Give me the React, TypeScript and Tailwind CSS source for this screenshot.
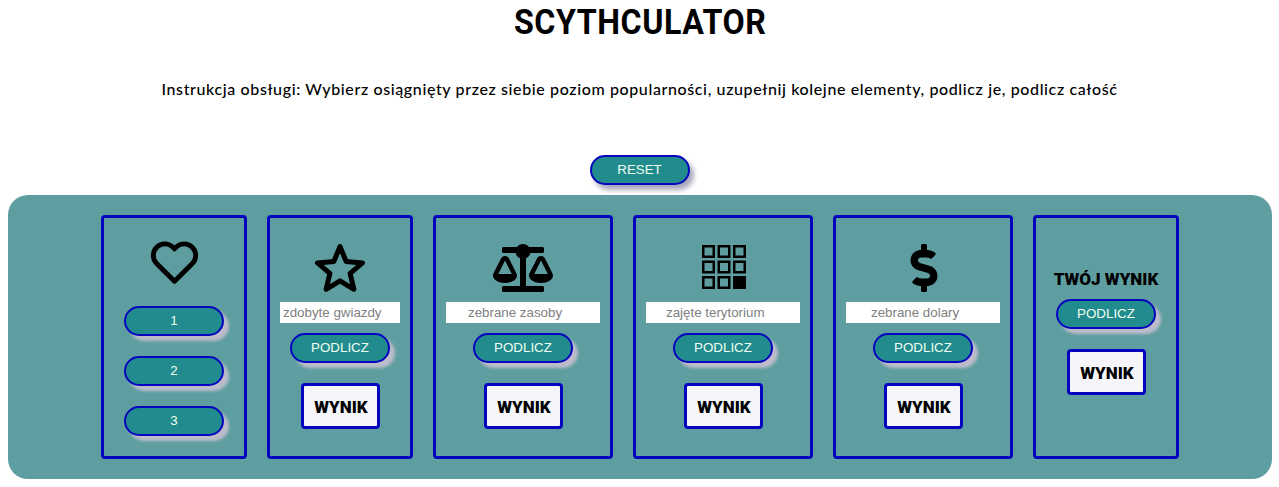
import { FaBalanceScale, FaDollarSign } from 'react-icons/fa';

function PillButton({ label, className = 'shadow-[5px_5px_3px_#bcbccb]' }: { label: string; className?: string }) {
    return (
        <button className={`h-[30px] w-[100px] rounded-[15px] border-2 border-[#0505c0] bg-[#228b8d] text-[13.33px] text-[#f0fff0] font-['Liberation_Sans',sans-serif] ${className}`}>
            {label}
        </button>
    );
}

function ResultBox({ className = '' }: { className?: string }) {
    return (
        <div className={`ml-[1px] flex h-[46px] w-[79px] items-center justify-center rounded-[4px] border-[3px] border-[#0505c0] bg-[#f5f5fa] pl-[1px] pt-[3px] text-[17px] font-black text-black font-['Roboto',sans-serif] ${className}`}>
            WYNIK
        </div>
    );
}

function HeartIcon() {
    return (
        <svg width="53" height="53" viewBox="0 0 24 24" fill="none" stroke="black" strokeWidth="2.2" strokeLinejoin="round">
            <path d="M12 20.5 L3.8 12.3 A5.2 5.2 0 0 1 11.2 5 L12 5.8 L12.8 5 A5.2 5.2 0 0 1 20.2 12.3 Z" />
        </svg>
    );
}

function StarIcon() {
    return (
        <svg width="50" height="48" viewBox="0 0 50 48" fill="none" stroke="black" strokeWidth="5" strokeLinejoin="round">
            <path d="M25 2.5 L31.2 17.6 L47.5 18.9 L35.1 29.4 L38.9 45.3 L25 36.8 L11.1 45.3 L14.9 29.4 L2.5 18.9 L18.8 17.6 Z" />
        </svg>
    );
}

function GridIcon() {
    const cells = [0, 1, 2, 3, 4, 5, 6, 7, 8];
    return (
        <svg width="44" height="44" viewBox="0 0 44 44" fill="none" className="ml-[2px] mt-[1px]">
            {cells.map((i) => (
                <rect
                    key={i}
                    x={1.25 + (i % 3) * 15.5}
                    y={1.25 + Math.floor(i / 3) * 15.5}
                    width="10.5"
                    height="10.5"
                    stroke="black"
                    strokeWidth="2.5"
                    fill={i === 8 ? 'black' : 'none'}
                />
            ))}
        </svg>
    );
}

function InputCard({
    icon,
    placeholder,
    width,
    inputWidth,
    pad,
}: {
    icon: React.ReactNode;
    placeholder: string;
    width: string;
    inputWidth: string;
    pad: string;
}) {
    return (
        <div className={`flex h-[244px] flex-col items-center rounded-[4px] border-[3px] border-[#0505c0] ${width}`}>
            <div className="flex h-[84px] w-full items-start justify-center pt-[26px]">{icon}</div>
            <input
                readOnly
                placeholder={placeholder}
                className={`h-[21px] bg-white text-[13.33px] text-black placeholder:text-[#808080] outline-none font-['Liberation_Sans',sans-serif] ${inputWidth} ${pad}`}
            />
            <PillButton label="PODLICZ" className="mt-[10px] shadow-[5px_5px_3px_#bcbccb]" />
            <ResultBox className="mt-5" />
        </div>
    );
}

export default function App() {
    return (
        <div className="h-[487px] w-full overflow-hidden bg-white">
            <div className="flex justify-center pl-[2px] pt-[4px]">
                <h1 className="scale-x-[0.92] text-[35px] leading-[38px] font-bold tracking-[0.6px] text-black font-['Roboto',sans-serif]">
                    SCYTHCULATOR
                </h1>
            </div>
            <p className="mt-[37px] text-center text-[16px] leading-5 font-medium tracking-[0.62px] text-black font-['Lato',sans-serif]">
                Instrukcja obsługi: Wybierz osiągnięty przez siebie poziom popularności, uzupełnij kolejne elementy, podlicz je, podlicz całość
            </p>
            <div className="mt-[56px] flex justify-center">
                <PillButton label="RESET" className="shadow-[4px_5px_5px_#a8a8bc]" />
            </div>
            <main className="ml-2 mr-[7px] mt-[10px] flex h-[284px] justify-center gap-5 rounded-[20px] bg-[#5f9ea0] pt-5">
                <div className="flex h-[244px] w-[146px] flex-col items-center rounded-[4px] border-[3px] border-[#0505c0]">
                    <div className="flex h-[73px] w-full items-start justify-center pt-[18px]">
                        <HeartIcon />
                    </div>
                    <div className="mt-[15px] flex flex-col gap-5">
                        <PillButton label="1" />
                        <PillButton label="2" />
                        <PillButton label="3" />
                    </div>
                </div>
                <InputCard
                    icon={<StarIcon />}
                    placeholder="zdobyte gwiazdy"
                    width="w-[146px]"
                    inputWidth="w-[120px]"
                    pad="pl-[3px]"
                />
                <InputCard
                    icon={<FaBalanceScale size={60} color="black" className="-mt-[6px]" />}
                    placeholder="zebrane zasoby"
                    width="w-[180px]"
                    inputWidth="w-[154px]"
                    pad="pl-[22px]"
                />
                <InputCard
                    icon={<GridIcon />}
                    placeholder="zajęte terytorium"
                    width="w-[180px]"
                    inputWidth="w-[154px]"
                    pad="pl-[20px]"
                />
                <InputCard
                    icon={<FaDollarSign size={48} color="black" className="ml-[2px]" />}
                    placeholder="zebrane dolary"
                    width="w-[180px]"
                    inputWidth="w-[154px]"
                    pad="pl-[25px]"
                />
                <div className="flex h-[244px] w-[146px] flex-col items-center rounded-[4px] border-[3px] border-[#0505c0]">
                    <div className="mt-[49px] text-[17px] leading-6 font-black text-black font-['Roboto',sans-serif]">TWÓJ WYNIK</div>
                    <PillButton label="PODLICZ" className="mt-2 shadow-[5px_5px_3px_#bcbccb]" />
                    <ResultBox className="mt-5" />
                </div>
            </main>
        </div>
    );
}
